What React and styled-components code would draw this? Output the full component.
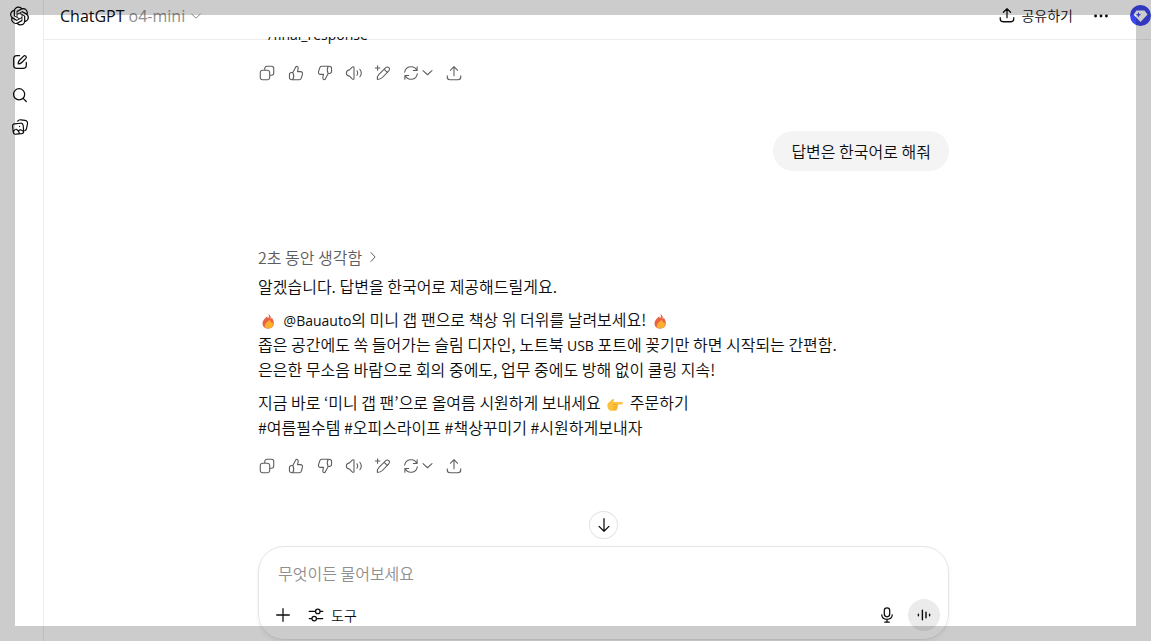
import styled, { createGlobalStyle } from "styled-components";

const GlobalStyle = createGlobalStyle`
  * {
    box-sizing: border-box;
  }
  body {
    margin: 0;
    background-color: white;
    color: #0d0d0d;
    font-family: "Noto Sans CJK KR", sans-serif;
    font-size: 16px;
    font-weight: 350;
  }
  button {
    font: inherit;
    color: inherit;
    background: none;
    border: none;
    padding: 0;
    cursor: pointer;
  }
`;

const Layout = styled.div`
  display: flex;
  height: 100vh;
  overflow: hidden;
`;
// 화면 전체를 덮는 반투명 테두리
const Frame = styled.div`
  position: fixed;
  inset: 0;
  z-index: 10;
  border: 15px solid rgba(0, 0, 0, 0.2);
  pointer-events: none;
`;
const Sidebar = styled.nav`
  display: flex;
  flex-direction: column;
  align-items: center;
  width: 44px;
  padding: 6px 4px 0 0;
  border-right: 1px solid #ededed;
  flex-shrink: 0;
`;
const IconButton = styled.button`
  display: flex;
  align-items: center;
  justify-content: center;
  width: ${(props) => props.$w || 29}px;
  height: ${(props) => props.$h || 29}px;
`;
const HomeLink = styled.a`
  display: flex;
  color: inherit;
  margin-bottom: 20px;
`;
const Main = styled.main`
  display: flex;
  flex-direction: column;
  flex: 1;
  min-width: 0;
`;
const Header = styled.header`
  display: flex;
  align-items: center;
  justify-content: space-between;
  height: 40px;
  padding: 0 0 8px 16px;
  border-bottom: 1px solid #ededed;
  flex-shrink: 0;
`;
const ModelButton = styled.button`
  display: flex;
  align-items: center;
  gap: 4px;
  font-family: "Open Sans", sans-serif;
  font-weight: 400;
`;
const ModelName = styled.span`
  display: flex;
  align-items: center;
  gap: 4px;
  color: #8f8f8f;
`;
const HeaderActions = styled.div`
  display: flex;
  align-items: center;
`;
const ShareButton = styled.button`
  display: flex;
  align-items: center;
  gap: 5px;
  margin-right: 13px;
  padding-bottom: 2px;
  font-size: 14px;
  line-height: 18px;
`;
const Badge = styled.button`
  display: flex;
  margin-left: 15px;
`;
const Thread = styled.div`
  flex: 1;
  min-height: 0;
  margin-top: -3px;
  overflow: hidden;
  padding-left: 12px;
`;
const Column = styled.div`
  max-width: 691px;
  margin: 0 auto;
`;
const Cut = styled.p`
  display: flex;
  align-items: flex-end;
  height: 7px;
  margin: 0 0 14px 10px;
  overflow: hidden;
  font-family: "Open Sans", sans-serif;
  font-size: 14px;
  font-weight: 400;
  line-height: 18px;
`;
const Actions = styled.div`
  display: flex;
  align-items: center;
  margin-left: -6px;
  color: #5d5d5d;
`;
const UserRow = styled.div`
  display: flex;
  justify-content: flex-end;
  margin: 44px 0 73px;
`;
const Bubble = styled.div`
  padding: 8px 18px;
  border-radius: 20px;
  background-color: #f4f4f4;
  line-height: 24px;
`;
const Thought = styled.button`
  display: flex;
  align-items: center;
  gap: 4px;
  height: 25px;
  margin-bottom: 5px;
  color: #5d5d5d;
`;
const Paragraph = styled.p`
  margin: 0 0 8px;
  line-height: 25px;
`;
const Latin = styled.span`
  font-family: "Open Sans", sans-serif;
  font-size: 14px;
  font-weight: 400;
  line-height: 1;
`;
const Emoji = styled.svg`
  width: 18px;
  height: 16px;
  margin: 0 2px;
  vertical-align: -3px;
`;
const Reply = styled.article`
  margin-bottom: 11px;
`;
const Bottom = styled.div`
  padding-left: 12px;
  flex-shrink: 0;
`;
const ScrollButton = styled.button`
  display: flex;
  align-items: center;
  justify-content: center;
  width: 29px;
  height: 28px;
  margin: 0 auto 7px;
  border: 1px solid #e3e3e3;
  border-radius: 50%;
`;
const Composer = styled.form`
  height: 94px;
  padding: 14px 8px 0 9px;
  border: 1px solid #e5e5e5;
  border-radius: 26px;
  margin-bottom: 1px;
  box-shadow: 0 2px 4px rgba(0, 0, 0, 0.06);
`;
const Prompt = styled.input`
  display: block;
  width: 100%;
  height: 24px;
  padding: 0 10px;
  border: none;
  outline: none;
  background: none;
  font: inherit;
  &::placeholder {
    color: #8f8f8f;
    opacity: 1;
  }
`;
const Tools = styled.div`
  display: flex;
  align-items: center;
  margin-top: 14px;
`;
const ToolButton = styled.button`
  display: flex;
  align-items: center;
  gap: 6px;
  margin: 0 auto 0 10px;
  font-size: 14px;
`;
const VoiceButton = styled(IconButton)`
  margin-left: 7px;
  border-radius: 50%;
  background-color: #ebebeb;
`;

const paths = {
  edit: "M9.500 3H6.500C4 3 3 4 3 6.500v7C3 16 4 17 6.500 17h7c2.500 0 3.500-1 3.500-3.500v-3M8 12c0-2 .5-3 1.500-4l4.500-4.500c1.600-1.600 4 .8 2.500 2.500L12 10.500c-1 1-2 1.500-4 1.500Z",
  search: "M9 3a6.200 6.200 0 1 0 0 12.400A6.200 6.200 0 0 0 9 3ZM13.500 13.700 17 17.200",
  copy: "M7.500 7V5A2.500 2.500 0 0 1 10 2.500h5A2.500 2.500 0 0 1 17.500 5v5a2.500 2.500 0 0 1-2.500 2.500h-2M5 7h5.500A2.500 2.500 0 0 1 13 9.500V15a2.500 2.500 0 0 1-2.500 2.500H5A2.500 2.500 0 0 1 2.500 15V9.500A2.500 2.500 0 0 1 5 7Z",
  up: "M6.500 9.500 10 2.700c1.800-.2 2.700 1 2.400 2.500L11.700 8.500H15c1.700 0 2.500 1.300 2.200 2.700l-1.200 4.100c-.4 1.500-1.200 2.200-2.500 2.200h-8C3.800 17.500 2.700 16.500 2.700 15v-3c0-1.700 1-2.500 2.500-2.500h1.300ZM6.500 9.500c1 2 1 6 0 8",
  down: "M13.500 10.500 10 17.300c-1.800.2-2.700-1-2.400-2.500l.7-3.300H5c-1.700 0-2.500-1.300-2.200-2.700L4 4.700c.4-1.500 1.200-2.200 2.500-2.200h8c1.700 0 2.800 1 2.800 2.500v3c0 1.700-1 2.500-2.500 2.500h-1.300ZM13.500 10.500c-1-2-1-6 0-8",
  speaker: "M10 3.500v13c-.5.8-1.300.6-2 0L5 13.500C2.500 13.200 1.500 12.200 1.500 10S2.500 6.800 5 6.500l3-3c.7-.6 1.500-.8 2 0ZM13.300 7.500c.9 1.500.9 3.500 0 5M16.500 5.800c2 2.600 2 5.800 0 8.400",
  pencil: "M4 2v5M1.500 4.500h5M3.800 17.200c-.5-3 .2-4.200 1.700-5.700l7.300-7.300c2.600-2.600 6 1 3.600 3.400L9.300 15c-1.600 1.700-2.800 2.200-5.500 2.200ZM11.300 6l3.800 3.500",
  refresh: "M3 9A7.100 7.100 0 0 1 16.500 7.200M16.800 3v4.200h-4.200M17 11A7.100 7.100 0 0 1 3.500 12.800M3.200 17v-4.200h4.200",
  chevron: "m4 7.500 6 5.500 6-5.500",
  right: "m7 3.500 6 6.500-6 6.500",
  share: "M10 13V3M6 7l4-4 4 4M2.500 13v1.500c0 2 1 3 3 3h9c2 0 3-1 3-3V13",
  arrow: "M10 3v14M4.500 11.500 10 17l5.500-5.500",
  plus: "M10 3v14M3 10h14",
  tools: "M2.500 6h7M14.500 6h3M2.500 14h3M10.500 14h7M12 3.500a2.500 2.500 0 1 0 0 5 2.500 2.500 0 0 0 0-5ZM8 11.500a2.500 2.500 0 1 0 0 5 2.500 2.500 0 0 0 0-5Z",
  mic: "M10 2a3 3 0 0 1 3 3v4a3 3 0 0 1-6 0V5a3 3 0 0 1 3-3ZM4.200 10c.5 6.400 11.100 6.400 11.600 0M10 15v3M7.500 18h5",
  voice: "M3 9v2M8 4v12M12.500 6.500v7M17 9v2",
  library: "M7.500 3.500C8.300 2 9.500 1.800 11 2l4.500.7c2.300.4 3.200 1.600 2.800 3.800l-1 5c-.2 1.200-.7 2-1.700 2.500M4 6.500l6.500-.7c1.800-.2 2.800.6 3 2.300l.6 6.400c.2 1.800-.6 2.700-2.300 2.900l-6.400.6c-1.800.2-2.700-.6-2.900-2.300L1.800 9.300c-.2-1.700.5-2.600 2.200-2.800ZM2.700 15c2.300-3.800 4.500-3.500 7 2.500M8.500 14c1.500-1.500 3-1.400 5.300.8M9.500 9.200v.3",
};

function Icon({ name, size = 18, stroke = 1.4 }) {
  return (
    <svg
      width={size}
      height={size}
      viewBox="0 0 20 20"
      fill="none"
      stroke="currentColor"
      strokeWidth={stroke}
      strokeLinecap="round"
      strokeLinejoin="round"
      aria-hidden="true"
    >
      <path d={paths[name]} />
    </svg>
  );
}

function Logo() {
  return (
    <svg width="19" height="20" viewBox="0 0 24 24" fill="currentColor" aria-hidden="true">
      <path d="M22.282 9.821a5.985 5.985 0 0 0-.516-4.910 6.046 6.046 0 0 0-6.510-2.900A6.065 6.065 0 0 0 4.981 4.182a5.985 5.985 0 0 0-3.998 2.900 6.046 6.046 0 0 0 .743 7.097 5.980 5.980 0 0 0 .510 4.911 6.051 6.051 0 0 0 6.515 2.900A5.985 5.985 0 0 0 13.260 24a6.056 6.056 0 0 0 5.772-4.206 5.990 5.990 0 0 0 3.998-2.900 6.056 6.056 0 0 0-.748-7.073zM13.260 22.430a4.476 4.476 0 0 1-2.876-1.040l.141-.081 4.779-2.758a.795.795 0 0 0 .393-.681v-6.737l2.020 1.169a.071.071 0 0 1 .038.052v5.583a4.504 4.504 0 0 1-4.495 4.493zM3.600 18.304a4.471 4.471 0 0 1-.535-3.014l.142.085 4.783 2.759a.771.771 0 0 0 .781 0l5.843-3.369v2.332a.080.080 0 0 1-.033.062L9.740 19.950a4.500 4.500 0 0 1-6.140-1.646zM2.340 7.896a4.485 4.485 0 0 1 2.366-1.973V11.600a.766.766 0 0 0 .388.677l5.815 3.354-2.020 1.169a.076.076 0 0 1-.071 0l-4.830-2.787A4.504 4.504 0 0 1 2.340 7.872zm16.597 3.856-5.833-3.388L15.119 7.200a.076.076 0 0 1 .071 0l4.830 2.791a4.494 4.494 0 0 1-.676 8.105v-5.678a.790.790 0 0 0-.407-.666zm2.010-3.023-.141-.086-4.774-2.782a.776.776 0 0 0-.785 0L9.409 9.230V6.897a.066.066 0 0 1 .028-.061l4.830-2.787a4.499 4.499 0 0 1 6.680 4.660zm-12.640 4.135-2.020-1.164a.080.080 0 0 1-.038-.057V6.075a4.499 4.499 0 0 1 7.375-3.453l-.142.080-4.778 2.758a.795.795 0 0 0-.393.682zm1.097-2.366 2.602-1.500 2.607 1.500v2.999l-2.597 1.500-2.607-1.500z" />
    </svg>
  );
}

function Fire() {
  return (
    <Emoji viewBox="0 0 18 16" role="img" aria-label="불">
      <path d="M8.500 1c.7 2 .4 3-.2 4.300C7.400 5 7.300 4 7.300 3.300 4.500 5.500 2.500 8 2.500 10.500 2.500 13.600 5 15.500 8 15.500s5.800-2 5.800-5.300c0-2.300-.8-4.200-2.400-5.700 0 .8-.1 1.500-.6 2C11 4 10.300 2 8.500 1Z" fill="#ea6040" />
      <path d="M9 6.500c.2 1.800-3 2.800-4 5C4 14 6 15.500 8.200 15.500c2.800 0 4.700-1.300 4.700-4 0-1.200-.4-2-1-2.700-.2.700-.5 1-1 1 .2-1.200-.6-2.500-1.900-3.300Z" fill="#fbb02d" />
    </Emoji>
  );
}

function Point() {
  return (
    <Emoji viewBox="0 0 18 16" role="img" aria-label="오른쪽">
      <path d="M1.500 8C2 6.500 4.500 5.500 6 3.500c.8-1.200 2.600-.5 2 1L7.300 6H15.500c1.700 0 1.700 2.600 0 2.600H11.500c1 .5.900 2-.1 2.300.7.700.4 1.900-.5 2.100.2 1-.4 1.800-1.500 1.800H5.500C3 14.800 1 12.500 1.500 8Z" fill="#fcc23c" />
      <path d="M7.500 8.700h4M7.500 11h3.800M7.500 13h3.200" stroke="#e79a26" strokeWidth=".7" fill="none" />
    </Emoji>
  );
}

function MessageActions() {
  return (
    <Actions>
      <IconButton aria-label="복사"><Icon name="copy" stroke={1.2} /></IconButton>
      <IconButton aria-label="좋은 응답"><Icon name="up" stroke={1.2} /></IconButton>
      <IconButton aria-label="별로인 응답"><Icon name="down" stroke={1.2} /></IconButton>
      <IconButton aria-label="소리내어 읽기"><Icon name="speaker" stroke={1.2} /></IconButton>
      <IconButton aria-label="편집"><Icon name="pencil" stroke={1.2} /></IconButton>
      <IconButton aria-label="다시 생성" $w={43}>
        <Icon name="refresh" stroke={1.2} />
        <Icon name="chevron" size={15} stroke={1.4} />
      </IconButton>
      <IconButton aria-label="공유" $w={28}><Icon name="share" stroke={1.2} /></IconButton>
    </Actions>
  );
}

function App() {
  return (
    <Layout>
      <GlobalStyle />
      <Sidebar>
        <HomeLink href="#" aria-label="ChatGPT"><Logo /></HomeLink>
        <IconButton aria-label="새 채팅" $h={32}><Icon name="edit" /></IconButton>
        <IconButton aria-label="채팅 검색" $h={33}><Icon name="search" /></IconButton>
        <IconButton aria-label="라이브러리" $h={32}><Icon name="library" stroke={1.3} /></IconButton>
      </Sidebar>
      <Main>
        <Header>
          <ModelButton>
            <span>ChatGPT</span>
            <ModelName>
              o4-mini
              <Icon name="chevron" size={14} />
            </ModelName>
          </ModelButton>
          <HeaderActions>
            <ShareButton>
              <Icon name="share" />
              공유하기
            </ShareButton>
            <IconButton aria-label="더 보기">
              <svg width="18" height="18" viewBox="0 0 20 20" fill="currentColor">
                <circle cx="4" cy="10" r="1.600" />
                <circle cx="10" cy="10" r="1.600" />
                <circle cx="16" cy="10" r="1.600" />
              </svg>
            </IconButton>
            <Badge aria-label="확장 프로그램">
              <svg width="21" height="21" viewBox="0 0 21 21">
                <circle cx="10.500" cy="10.500" r="10.500" fill="#3c46f0" />
                <path d="M6.500 5.500h8L17.500 9.500l-7 7.500-7-7.500Z" fill="white" />
                <path d="m8.500 7 .8 2 2 .8-2 .8-.8 2-.8-2-2-.8 2-.8Z" fill="#3c46f0" />
              </svg>
            </Badge>
          </HeaderActions>
        </Header>
        <Thread>
          <Column>
            <Cut>/final_response</Cut>
            <MessageActions />
            <UserRow>
              <Bubble>답변은 한국어로 해줘</Bubble>
            </UserRow>
            <Reply>
              <Thought>
                2초 동안 생각함
                <Icon name="right" size={14} />
              </Thought>
              <Paragraph>알겠습니다. 답변을 한국어로 제공해드릴게요.</Paragraph>
              <Paragraph>
                <Fire /> <Latin>@Bauauto</Latin>의 미니 갭 팬으로 책상 위 더위를 날려보세요! <Fire />
                <br />
                좁은 공간에도 쏙 들어가는 슬림 디자인, 노트북 <Latin>USB</Latin> 포트에 꽂기만 하면 시작되는 간편함.
                <br />
                은은한 무소음 바람으로 회의 중에도, 업무 중에도 방해 없이 쿨링 지속!
              </Paragraph>
              <Paragraph>
                지금 바로 ‘미니 갭 팬’으로 올여름 시원하게 보내세요 <Point /> 주문하기
                <br />
                #여름필수템 #오피스라이프 #책상꾸미기 #시원하게보내자
              </Paragraph>
            </Reply>
            <MessageActions />
          </Column>
        </Thread>
        <Bottom>
          <ScrollButton aria-label="맨 아래로"><Icon name="arrow" /></ScrollButton>
          <Column>
            <Composer>
              <Prompt aria-label="메시지" placeholder="무엇이든 물어보세요" />
              <Tools>
                <IconButton type="button" aria-label="추가"><Icon name="plus" /></IconButton>
                <ToolButton type="button">
                  <Icon name="tools" />
                  도구
                </ToolButton>
                <IconButton type="button" aria-label="음성 입력"><Icon name="mic" /></IconButton>
                <VoiceButton type="button" aria-label="음성 모드" $w={32} $h={32}>
                  <Icon name="voice" size={16} stroke={1.8} />
                </VoiceButton>
              </Tools>
            </Composer>
          </Column>
        </Bottom>
      </Main>
      <Frame />
    </Layout>
  );
}

export default App;
